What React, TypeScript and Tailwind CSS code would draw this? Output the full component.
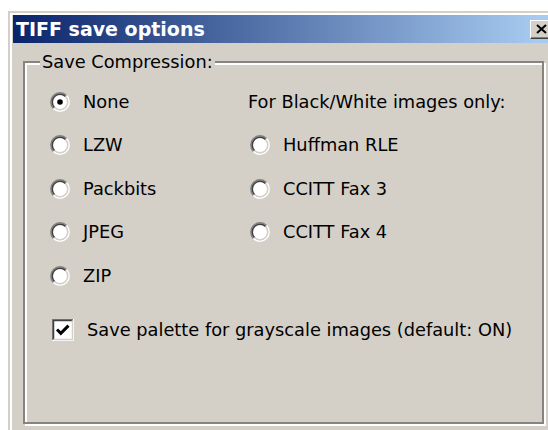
import React from 'react';

type Option = {
  label: string;
  checked?: boolean;
};

const leftOptions: Option[] = [
  { label: 'None', checked: true },
  { label: 'LZW' },
  { label: 'Packbits' },
  { label: 'JPEG' },
  { label: 'ZIP' },
];

const rightOptions: Option[] = [{ label: 'Huffman RLE' }, { label: 'CCITT Fax 3' }, { label: 'CCITT Fax 4' }];

// classic sunken radio: grey/white outer ring, dark/face inner ring
function RadioMark({ checked }: { checked?: boolean }) {
  return (
    <svg width="20" height="20" viewBox="0 0 20 20" className="shrink-0">
      <circle cx="10" cy="10" r="7.5" fill="#ffffff" />
      <path d="M3.46 16.54 A9.25 9.25 0 0 1 16.54 3.46" fill="none" stroke="#808080" strokeWidth="1.5" />
      <path d="M16.54 3.46 A9.25 9.25 0 0 1 3.46 16.54" fill="none" stroke="#ffffff" strokeWidth="1.5" />
      <path d="M4.52 15.48 A7.75 7.75 0 0 1 15.48 4.52" fill="none" stroke="#404040" strokeWidth="1.5" />
      <path d="M15.48 4.52 A7.75 7.75 0 0 1 4.52 15.48" fill="none" stroke="#d4d0c8" strokeWidth="1.5" />
      {checked && <circle cx="10" cy="10" r="2.8" fill="#000000" />}
    </svg>
  );
}

function Radio({ label, checked }: Option) {
  return (
    <div className="flex items-center gap-[13px]">
      <RadioMark checked={checked} />
      <span>{label}</span>
    </div>
  );
}

function CheckMark() {
  return (
    <svg width="22" height="22" viewBox="0 0 22 22" className="shrink-0">
      <rect x="0" y="0" width="22" height="22" fill="#ffffff" />
      <path d="M0 22 V0 H22" fill="none" stroke="#808080" strokeWidth="3" />
      <path d="M1.5 20.5 V1.5 H20.5" fill="none" stroke="#404040" strokeWidth="1.5" />
      <path d="M0 22 H22 V0" fill="none" stroke="#ffffff" strokeWidth="2" />
      <path d="M1.5 20.5 H20.5 V1.5" fill="none" stroke="#d4d0c8" strokeWidth="1.5" />
      <path d="M5 10.5 L8.8 14.3 L16.5 6.6" fill="none" stroke="#000000" strokeWidth="3" />
    </svg>
  );
}

function CloseButton() {
  return (
    <div className="flex h-[19px] w-[22px] items-center justify-center border-t border-l border-t-white border-l-white border-r border-b border-r-[#404040] border-b-[#404040] bg-[#d4d0c8] shadow-[inset_-1px_-1px_0_#808080]">
      <svg width="11" height="10" viewBox="0 0 11 10">
        <path d="M1 1 L10 9 M10 1 L1 9" stroke="#000000" strokeWidth="2" />
      </svg>
    </div>
  );
}

export default function App() {
  return (
    <div className="h-[430px] w-[548px] overflow-hidden bg-white pl-[8px] pt-[11px] font-['DejaVu_Sans',sans-serif] text-[17.8px] text-black">
      <div className="h-[440px] w-[552px] border-t-2 border-l-2 border-[#d4d0c8] bg-[#d4d0c8]">
        <div className="h-full border-t-2 border-l-2 border-white px-px">
          {/* title bar */}
          <div className="flex h-[28px] items-center justify-between bg-[linear-gradient(to_right,#0a246a,#a6caf0_96%)] pl-[3px] pr-[7px]">
            <span className="text-[19px] leading-none font-bold text-white">TIFF save options</span>
            <CloseButton />
          </div>

          <fieldset className="mt-[8px] ml-[10px] h-[373px] w-[521px] border-2 border-[#868480] shadow-[2px_2px_0_#ffffff,inset_2px_2px_0_#ffffff]">
            <legend className="ml-[15px] bg-[#d4d0c8] px-[2px] leading-[22px]">Save Compression:</legend>

            <div className="pt-[7px] pl-[25px]">
              <div className="grid auto-rows-[43.5px] grid-cols-[198px_1fr] items-center leading-[22px]">
                <Radio {...leftOptions[0]} />
                <span>For Black/White images only:</span>
                {leftOptions.slice(1).map((opt, i) => (
                  <React.Fragment key={opt.label}>
                    <Radio {...opt} />
                    {rightOptions[i] ? (
                      <div className="ml-[2px]">
                        <Radio {...rightOptions[i]} />
                      </div>
                    ) : (
                      <div />
                    )}
                  </React.Fragment>
                ))}
              </div>

              <div className="mt-[21px] flex items-center gap-[13px] pl-[2px] leading-[22px]">
                <CheckMark />
                <span>Save palette for grayscale images (default: ON)</span>
              </div>
            </div>
          </fieldset>
        </div>
      </div>
    </div>
  );
}
